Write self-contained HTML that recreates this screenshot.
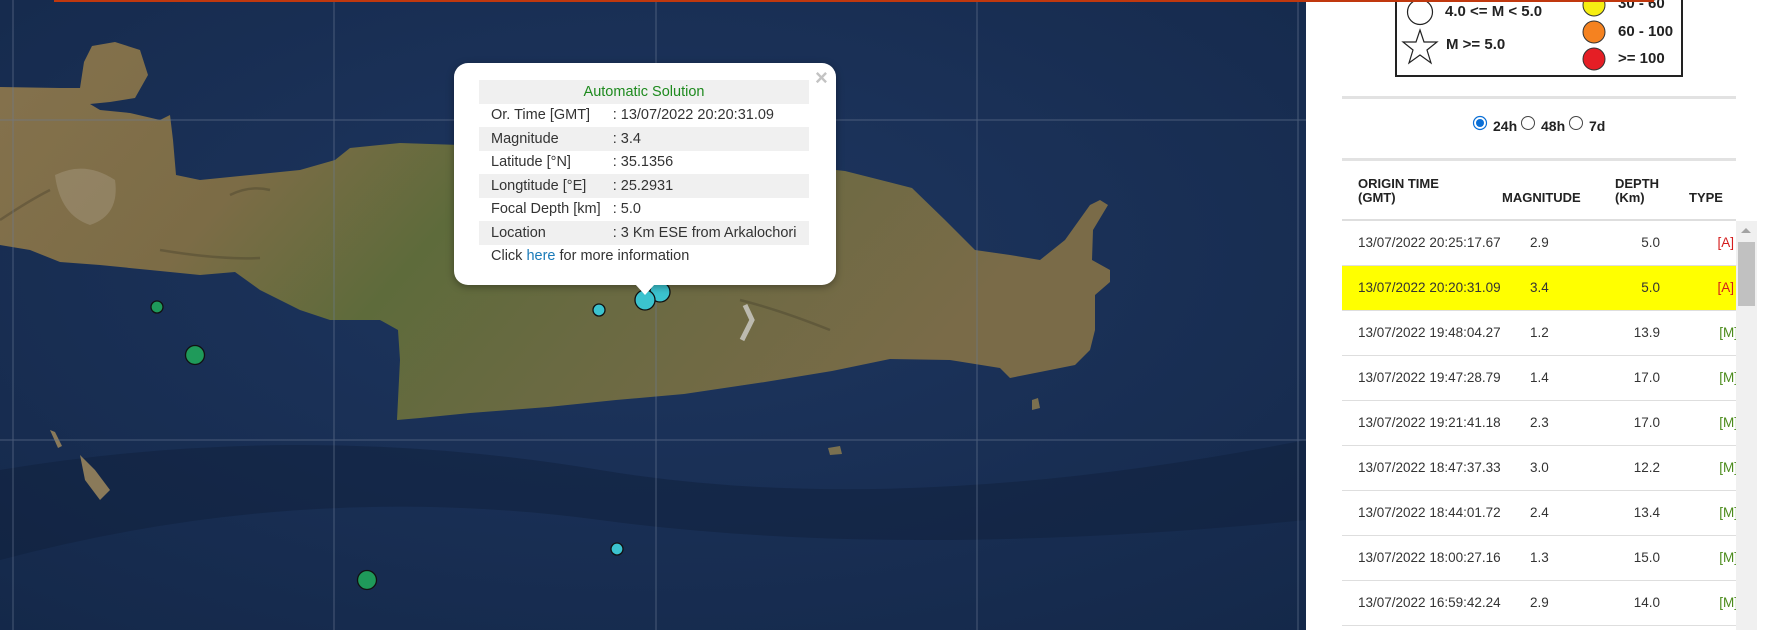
<!DOCTYPE html>
<html><head><meta charset="utf-8"><style>
*{margin:0;padding:0;box-sizing:border-box}
body{width:1774px;height:630px;overflow:hidden;position:relative;font-family:"Liberation Sans",Arial,sans-serif;background:#1a2d50}
.abs{position:absolute}
#map{left:0;top:0;width:1306px;height:630px}
#panel{left:1306px;top:0;width:468px;height:630px;background:#fff}
.pop{left:454px;top:63px;width:382px;height:222px;background:#fff;border-radius:14px;box-shadow:0 2px 8px rgba(0,0,0,.35)}
.pt{position:absolute;left:25px;top:17px;width:330px;border-collapse:collapse;font-size:14.5px;color:#333}
.pt td{height:23.5px;padding:0 0 0 12px;white-space:nowrap}
.pt tr.g td{background:#f0f0f0}
.lg{font-weight:bold;font-size:15px;color:#222}
.hd{font-weight:bold;font-size:13px;color:#222;line-height:14px}
.row{position:absolute;left:1342px;width:394px;height:45px;border-bottom:1px solid #dedede;font-size:13.5px;color:#333}
.row span{position:absolute;top:14px}
</style></head><body>
<svg id="map" class="abs" width="1306" height="630" viewBox="0 0 1306 630">
<defs>
<radialGradient id="sea" cx="50%" cy="40%" r="80%"><stop offset="0" stop-color="#1e3660"/><stop offset="1" stop-color="#142849"/></radialGradient>
<linearGradient id="land" x1="0" y1="0" x2="1" y2="0.3"><stop offset="0" stop-color="#85724d"/><stop offset="0.3" stop-color="#7c6c46"/><stop offset="0.5" stop-color="#5e6b3b"/><stop offset="0.7" stop-color="#6a6a42"/><stop offset="1" stop-color="#7a6b48"/></linearGradient>
</defs>
<rect width="1306" height="630" fill="url(#sea)"/>
<path d="M0 470 Q300 420 600 470 T1306 440 L1306 520 Q900 560 600 520 T0 560Z" fill="#10203b" opacity=".5"/>
<path d="M0 87 L60 88 L80 88 L84 62 L92 46 L115 42 L140 50 L148 75 L135 98 L110 102 L90 104 L100 110 L130 113 L160 120 L170 115 L173 140 L176 175 L200 180 L250 175 L300 170 L335 160 L350 148 L400 143 L460 145 L560 150 L700 155 L845 171 L912 188 L945 220 L975 250 L1010 255 L1040 260 L1065 240 L1090 205 L1100 200 L1108 205 L1093 230 L1092 260 L1110 270 L1110 282 L1095 295 L1095 330 L1090 350 L1075 365 L1040 372 L1010 378 L1000 368 L950 360 L890 359 L832 371 L765 382 L684 394 L616 400 L548 407 L470 413 L420 418 L397 420 L400 360 L398 330 L380 320 L330 320 L300 310 L260 290 L235 272 L200 275 L150 270 L100 265 L60 262 L30 250 L0 245Z" fill="url(#land)"/>
<path d="M55 175 Q85 160 115 180 Q120 215 90 225 Q60 215 55 175Z" fill="#a89c82" opacity=".45"/>
<g stroke="#3e3a28" stroke-width="2.5" fill="none" opacity=".35">
<path d="M0 220 Q30 200 50 190"/><path d="M160 250 Q220 260 260 258"/><path d="M230 195 Q250 185 270 190"/><path d="M740 300 Q780 310 830 330"/></g>
<path d="M745 305 L752 320 L742 340" stroke="#ddd" stroke-width="5" fill="none" opacity=".7"/>
<path d="M50 430 L55 432 L62 446 L58 448Z" fill="#8a7a5a"/>
<path d="M80 455 L95 470 L110 490 L100 500 L85 480Z" fill="#8a7a5a"/>
<path d="M828 448 L840 446 L842 454 L830 455Z" fill="#7a7050"/>
<path d="M1032 400 L1038 398 L1040 408 L1032 410Z" fill="#7a7050"/>
<g stroke="#6b7a94" stroke-width="1" opacity=".6"><line x1="13" y1="0" x2="13" y2="630"/><line x1="334" y1="0" x2="334" y2="630"/><line x1="656" y1="0" x2="656" y2="630"/><line x1="977" y1="0" x2="977" y2="630"/><line x1="1298" y1="0" x2="1298" y2="630"/><line x1="0" y1="120" x2="1306" y2="120"/><line x1="0" y1="440" x2="1306" y2="440"/></g>
<g stroke="#111" stroke-width="1.3">
<circle cx="157" cy="307" r="6" fill="#1f9a5a"/><circle cx="195" cy="355" r="9.5" fill="#1f9a5a"/><circle cx="367" cy="580" r="9.5" fill="#1f9a5a"/>
<circle cx="617" cy="549" r="6" fill="#3bc3cf"/><circle cx="599" cy="310" r="6" fill="#3bc3cf"/><circle cx="660" cy="292" r="10" fill="#3bc3cf"/><circle cx="645" cy="300" r="10" fill="#3bc3cf"/></g>
</svg>
<div class="abs pop">
<table class="pt">
<tr class="g"><td colspan="2" style="text-align:center;color:#1e8a1e;padding:0">Automatic Solution</td></tr>
<tr><td>Or. Time [GMT]</td><td style="padding-left:4px">: 13/07/2022 20:20:31.09</td></tr>
<tr class="g"><td>Magnitude</td><td style="padding-left:4px">: 3.4</td></tr>
<tr><td>Latitude [°N]</td><td style="padding-left:4px">: 35.1356</td></tr>
<tr class="g"><td>Longtitude [°E]</td><td style="padding-left:4px">: 25.2931</td></tr>
<tr><td>Focal Depth [km]</td><td style="padding-left:4px">: 5.0</td></tr>
<tr class="g"><td>Location</td><td style="padding-left:4px">: 3 Km ESE from Arkalochori</td></tr>
<tr><td colspan="2">Click <span style="color:#1a7ab8">here</span> for more information</td></tr>
</table>
<div class="abs" style="left:361px;top:2px;font-size:22px;color:#c3c3c3;font-weight:bold">×</div>
</div>
<div class="abs" style="left:635px;top:284px;width:0;height:0;border-left:10px solid transparent;border-right:10px solid transparent;border-top:11px solid #fff"></div>
<div id="panel" class="abs"></div>
<div class="abs" style="left:1395px;top:-4px;width:288px;height:81px;border:2px solid #222"></div>
<svg class="abs" style="left:1395px;top:0" width="288" height="76">
<circle cx="25" cy="12" r="12.5" fill="#fff" stroke="#222" stroke-width="1.2"/>
<path d="M25 30 L29 42 L42 42 L32 50 L36 63 L25 55 L14 63 L18 50 L8 42 L21 42Z" fill="none" stroke="#222" stroke-width="1.2"/>
<circle cx="199" cy="5" r="11" fill="#f6ee12" stroke="#333"/>
<circle cx="199" cy="32" r="11" fill="#f58220" stroke="#333"/>
<circle cx="199" cy="59" r="11" fill="#e51e25" stroke="#333"/>
</svg>
<div class="abs lg" style="left:1445px;top:3px">4.0 &lt;= M &lt; 5.0</div>
<div class="abs lg" style="left:1446px;top:36px">M &gt;= 5.0</div>
<div class="abs lg" style="left:1618px;top:-5px">30 - 60</div>
<div class="abs lg" style="left:1618px;top:23px">60 - 100</div>
<div class="abs lg" style="left:1618px;top:50px">&gt;= 100</div>
<div class="abs" style="left:54px;top:0;width:1600px;height:2px;background:#c0380e"></div>
<div class="abs" style="left:1342px;top:96px;width:394px;height:3px;background:#e2e2e2"></div>
<svg class="abs" style="left:1470px;top:114px" width="130" height="20">
<circle cx="10" cy="9" r="6.5" fill="#fff" stroke="#0a6fd6" stroke-width="1.2"/><circle cx="10" cy="9" r="4" fill="#0a6fd6"/>
<circle cx="58" cy="9" r="6.5" fill="#fff" stroke="#444"/><circle cx="106" cy="9" r="6.5" fill="#fff" stroke="#444"/></svg>
<div class="abs hd" style="left:1493px;top:119px;font-size:14px">24h</div>
<div class="abs hd" style="left:1541px;top:119px;font-size:14px">48h</div>
<div class="abs hd" style="left:1589px;top:119px;font-size:14px">7d</div>
<div class="abs" style="left:1342px;top:158px;width:394px;height:3px;background:#e2e2e2"></div>
<div class="abs hd" style="left:1358px;top:177px">ORIGIN TIME<br>(GMT)</div>
<div class="abs hd" style="left:1502px;top:191px">MAGNITUDE</div>
<div class="abs hd" style="left:1615px;top:177px">DEPTH<br>(Km)</div>
<div class="abs hd" style="left:1689px;top:191px">TYPE</div>
<div class="abs" style="left:1342px;top:219px;width:394px;height:2px;background:#dedede"></div>
<div class="row" style="top:221px"><span style="left:16px">13/07/2022 20:25:17.67</span><span style="left:188px">2.9</span><span style="right:76px">5.0</span><span style="right:2px;color:#d41c1c">[A]</span></div>
<div class="row" style="top:266px;background:#ffff00"><span style="left:16px">13/07/2022 20:20:31.09</span><span style="left:188px">3.4</span><span style="right:76px">5.0</span><span style="right:2px;color:#d41c1c">[A]</span></div>
<div class="row" style="top:311px"><span style="left:16px">13/07/2022 19:48:04.27</span><span style="left:188px">1.2</span><span style="right:76px">13.9</span><span style="right:-2px;color:#4a8a1a">[M]</span></div>
<div class="row" style="top:356px"><span style="left:16px">13/07/2022 19:47:28.79</span><span style="left:188px">1.4</span><span style="right:76px">17.0</span><span style="right:-2px;color:#4a8a1a">[M]</span></div>
<div class="row" style="top:401px"><span style="left:16px">13/07/2022 19:21:41.18</span><span style="left:188px">2.3</span><span style="right:76px">17.0</span><span style="right:-2px;color:#4a8a1a">[M]</span></div>
<div class="row" style="top:446px"><span style="left:16px">13/07/2022 18:47:37.33</span><span style="left:188px">3.0</span><span style="right:76px">12.2</span><span style="right:-2px;color:#4a8a1a">[M]</span></div>
<div class="row" style="top:491px"><span style="left:16px">13/07/2022 18:44:01.72</span><span style="left:188px">2.4</span><span style="right:76px">13.4</span><span style="right:-2px;color:#4a8a1a">[M]</span></div>
<div class="row" style="top:536px"><span style="left:16px">13/07/2022 18:00:27.16</span><span style="left:188px">1.3</span><span style="right:76px">15.0</span><span style="right:-2px;color:#4a8a1a">[M]</span></div>
<div class="row" style="top:581px"><span style="left:16px">13/07/2022 16:59:42.24</span><span style="left:188px">2.9</span><span style="right:76px">14.0</span><span style="right:-2px;color:#4a8a1a">[M]</span></div>
<div class="abs" style="left:1736px;top:221px;width:21px;height:409px;background:#f0f0f0"></div>
<div class="abs" style="left:1741px;top:228px;width:0;height:0;border-left:5px solid transparent;border-right:5px solid transparent;border-bottom:5px solid #a3a3a3"></div>
<div class="abs" style="left:1738px;top:242px;width:17px;height:64px;background:#c1c1c1"></div>
</body></html>
